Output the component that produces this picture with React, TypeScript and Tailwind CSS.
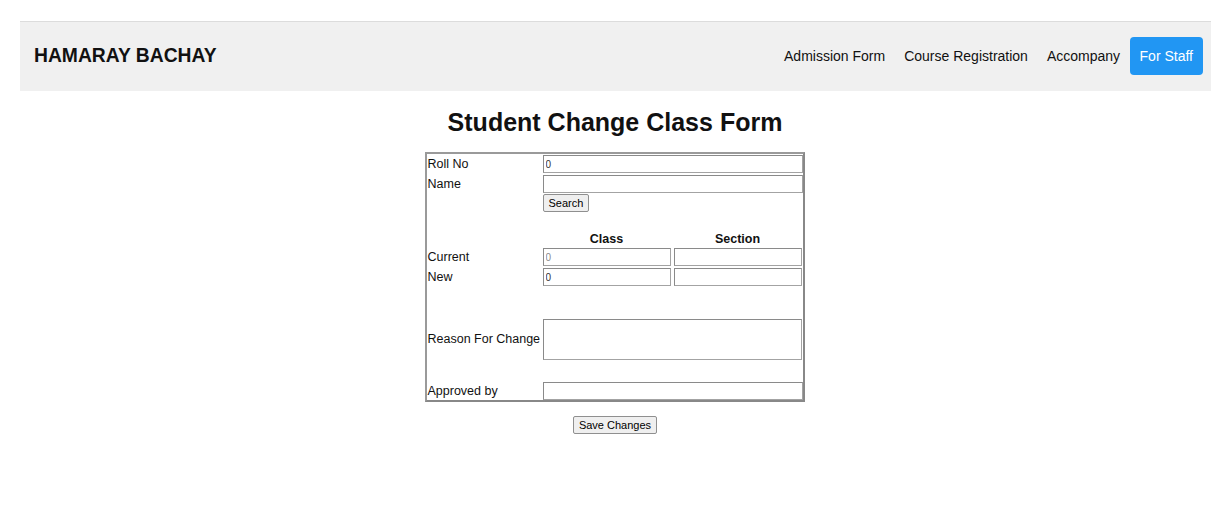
import React from 'react';

const font = "font-['Liberation_Sans',Arial,sans-serif]";

const navLinks = ['Admission Form', 'Course Registration', 'Accompany'];

const inputCls =
  'h-[18px] border border-[#a3a3a3] border-t-[#8a8a8a] border-l-[#8a8a8a] bg-white px-[2px] text-[10px] text-[#333] outline-none';

const btnCls =
  'h-[18px] rounded-[2px] border border-[#8f8f8f] bg-[#efefef] px-[5px] text-[11px] leading-none text-black';

const Row = ({ label, children, className = '' }: { label?: string; children?: React.ReactNode; className?: string }) => (
  <div className={`flex items-center ${className}`}>
    <span className="w-[115px] shrink-0 whitespace-nowrap text-[12.5px] leading-none text-[#111]">{label}</span>
    {children}
  </div>
);

export default function App() {
  return (
    <div className={`${font} min-h-[528px] bg-white pt-[21px]`}>
      <nav className="ml-[20px] mr-[19px] flex h-[70px] items-center justify-between border-t border-[#dcdcdc] bg-[#f0f0f0] pl-[14px] pr-[8px]">
        <span className="text-[19.3px] font-bold text-[#111]">HAMARAY BACHAY</span>
        <div className="-mt-[1px] flex items-center">
          {navLinks.map((l) => (
            <a key={l} className="px-[9.5px] py-[10px] text-[14px] leading-[18px] text-[#111]">
              {l}
            </a>
          ))}
          <a className="rounded-[4px] bg-[#2196f3] px-[10px] py-[10px] text-[14px] leading-[18px] text-white">For Staff</a>
        </div>
      </nav>

      <h2 className="mt-[16px] text-center text-[25px] font-bold leading-[30px] text-[#111]">Student Change Class Form</h2>

      <div className="mt-[15px] flex flex-col items-center">
        <div className="-ml-[1px] flex w-[380px] flex-col border-2 border-[#9a9a9a] border-b-[#888] border-r-[#888] pl-[1px] pt-[1px]">
          <Row label="Roll No">
            <input className={`${inputCls} w-[260px]`} defaultValue="0" />
          </Row>
          <Row label="Name" className="mt-[2px]">
            <input className={`${inputCls} w-[260px]`} />
          </Row>
          <Row className="mt-[1px]">
            <button className={btnCls}>Search</button>
          </Row>
          <Row className="mt-[19px] h-[16px]">
            <span className="w-[128px] text-center text-[12.5px] font-bold text-[#111]">Class</span>
            <span className="ml-[3px] w-[128px] text-center text-[12.5px] font-bold text-[#111]">Section</span>
          </Row>
          <Row label="Current" className="mt-[1px]">
            <input className={`${inputCls} w-[128px] !text-[#8a8a8a]`} defaultValue="0" />
            <input className={`${inputCls} ml-[3px] w-[128px]`} />
          </Row>
          <Row label="New" className="mt-[2px]">
            <input className={`${inputCls} w-[128px]`} defaultValue="0" />
            <input className={`${inputCls} ml-[3px] w-[128px]`} />
          </Row>
          <Row label="Reason For Change" className="mt-[33px]">
            <textarea className="h-[41px] w-[259px] resize-none border border-[#a3a3a3] border-t-[#8a8a8a] border-l-[#8a8a8a] bg-white outline-none" />
          </Row>
          <Row label="Approved by" className="mt-[22px]">
            <input className={`${inputCls} w-[260px]`} />
          </Row>
        </div>
        <button className={`${btnCls} mt-[14px] px-[4px]`}>Save Changes</button>
      </div>
    </div>
  );
}
